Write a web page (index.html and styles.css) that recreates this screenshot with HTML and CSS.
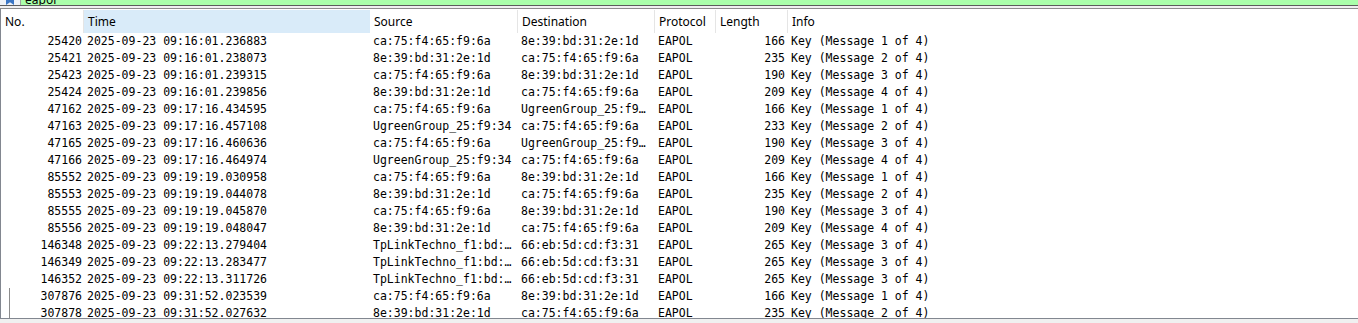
FILE: index.html
```html
<!DOCTYPE html>
<html lang="en">
<head>
    <meta charset="UTF-8">
    <title>Packet list</title>
    <link rel="stylesheet" href="styles.css">
</head>
<body>

    <!-- display filter (scrolled, only its bottom edge shows) -->
    <div class="filter-bar">
        <div class="filter-icon">
            <svg width="8" height="5" viewBox="0 0 8 5"><path d="M0 0H8V5L4 2.2L0 5Z" fill="#3b76c4"/></svg>
        </div>
        <div class="filter-text">eapol</div>
    </div>

    <div class="packet-list">
        <div class="list-header">
            <div class="col-head">No.</div>
            <div class="col-head sorted">Time</div>
            <div class="col-head">Source</div>
            <div class="col-head">Destination</div>
            <div class="col-head">Protocol</div>
            <div class="col-head">Length</div>
            <div class="col-head last">Info</div>
        </div>
        <div id="rows"></div>
    </div>

    <script>
        const A = "ca:75:f4:65:f9:6a";
        const B = "8e:39:bd:31:2e:1d";
        const U = "UgreenGroup_25:f9:34";
        const U2 = "UgreenGroup_25:f9\u2026";
        const T = "TpLinkTechno_f1:bd:\u2026";
        const C = "66:eb:5d:cd:f3:31";

        // no, time, src, dst, len, message, related
        const packets = [
            [25420, "09:16:01.236883", A, B, 166, 1],
            [25421, "09:16:01.238073", B, A, 235, 2],
            [25423, "09:16:01.239315", A, B, 190, 3],
            [25424, "09:16:01.239856", B, A, 209, 4],
            [47162, "09:17:16.434595", A, U2, 166, 1],
            [47163, "09:17:16.457108", U, A, 233, 2],
            [47165, "09:17:16.460636", A, U2, 190, 3],
            [47166, "09:17:16.464974", U, A, 209, 4],
            [85552, "09:19:19.030958", A, B, 166, 1],
            [85553, "09:19:19.044078", B, A, 235, 2],
            [85555, "09:19:19.045870", A, B, 190, 3],
            [85556, "09:19:19.048047", B, A, 209, 4],
            [146348, "09:22:13.279404", T, C, 265, 3],
            [146349, "09:22:13.283477", T, C, 265, 3],
            [146352, "09:22:13.311726", T, C, 265, 3],
            [307876, "09:31:52.023539", A, B, 166, 1, true],
            [307878, "09:31:52.027632", B, A, 235, 2, true]
        ];

        const rows = document.getElementById("rows");
        packets.forEach(p => {
            const row = document.createElement("div");
            row.className = "packet-row" + (p[6] ? " related" : "");
            const cells = [
                ["no", p[0]],
                ["", "2025-09-23 " + p[1]],
                ["", p[2]],
                ["", p[3]],
                ["", "EAPOL"],
                ["len", p[4]],
                ["", "Key (Message " + p[5] + " of 4)"]
            ];
            cells.forEach(c => {
                const cell = document.createElement("div");
                cell.className = "cell " + c[0];
                cell.textContent = c[1];
                row.appendChild(cell);
            });
            rows.appendChild(row);
        });
    </script>

</body>
</html>
```

FILE: styles.css
```css
body {
    margin: 0;
    height: 323px;
    overflow: hidden;
    background-color: #f0f0f0;
    font-family: "Noto Sans", Arial, sans-serif;
    color: #000;
}
.filter-bar {
    display: flex;
    height: 5px;
    overflow: hidden;
    background-color: #aaffaa;
    border-bottom: 1px solid #5c5c5c;
}
.filter-icon {
    width: 20px;
    display: flex;
    justify-content: center;
    align-items: flex-end;
    background-color: #eef2f7;
    border-right: 1px solid #a0a0a0;
}
.filter-icon svg {
    display: block;
}
.filter-text {
    align-self: flex-end;
    padding-left: 4px;
    font-size: 12px;
    line-height: 14px;
    margin-bottom: -2px;
}
.packet-list {
    margin-top: 2px;
    height: 309px;
    overflow: hidden;
    background-color: white;
    border-top: 1px solid #8c8c8c;
    border-left: 1px solid #828790;
    border-bottom: 1px solid #828790;
}
.list-header, .packet-row {
    display: grid;
    grid-template-columns: 83px 286px 148px 137px 61px 72px 1fr;
}
.list-header {
    height: 23px;
    margin-top: 1px;
}
.col-head {
    box-sizing: border-box;
    padding-left: 4px;
    font-size: 12px;
    line-height: 23px;
    border-right: 1px solid #e5e5e5;
    white-space: nowrap;
}
.col-head.sorted {
    background-color: #d9ebf9;
    border-right-color: #d9ebf9;
}
.col-head.last {
    border-right: none;
}
.packet-row {
    height: 17px;
}
.cell {
    box-sizing: border-box;
    padding-left: 3px;
    font-family: "DejaVu Sans Mono", "Liberation Mono", monospace;
    font-size: 11.5px;
    line-height: 17px;
    white-space: pre;
    overflow: hidden;
}
.cell.no, .cell.len {
    text-align: right;
    padding-left: 0;
    padding-right: 3px;
}
.cell.no {
    padding-right: 2px;
}
.related .cell.no {
    background: linear-gradient(#8c8c8c, #8c8c8c) no-repeat 8px 0 / 1px 100%;
}
```
